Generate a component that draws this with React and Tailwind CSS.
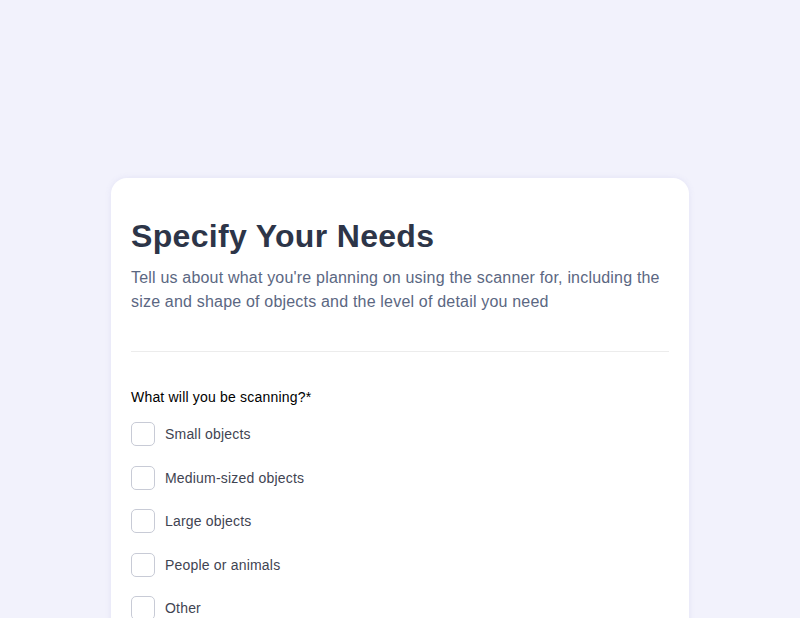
export default function App() {
    const options = ['Small objects', 'Medium-sized objects', 'Large objects', 'People or animals', 'Other'];

    return (
        <div className="min-h-screen bg-[#f2f2fc] pt-[178px] font-['Liberation_Sans',Arial,sans-serif] tracking-[0.012em]">
            <div className="mx-auto w-[578px] rounded-2xl bg-white px-5 pt-[38px] pb-10 shadow-[0_0_6px_rgba(120,120,200,0.12)]">
                {/* Header */}
                <div className="border-b border-[#ececec] pb-[37px]">
                    <h1 className="text-[32px] font-bold leading-10 tracking-[0.01em] text-[#2d3548]">Specify Your Needs</h1>
                    <p className="mt-[10px] text-base leading-6 text-[#5b6782]">
                        Tell us about what you're planning on using the scanner for, including the size and shape of objects and the level of detail you need
                    </p>
                </div>

                {/* Question */}
                <div className="pt-[35px]">
                    <p className="text-sm leading-5 text-black">What will you be scanning?*</p>
                    <div className="mt-[15px] flex flex-col gap-[19.5px]">
                        {options.map((option) => (
                            <label key={option} className="flex h-6 items-center gap-[10px]">
                                <span className="h-6 w-6 rounded-[5px] border border-[#c8cbd6] bg-white"></span>
                                <span className="text-sm text-[#3f4452]">{option}</span>
                            </label>
                        ))}
                    </div>
                </div>
            </div>
        </div>
    );
}
